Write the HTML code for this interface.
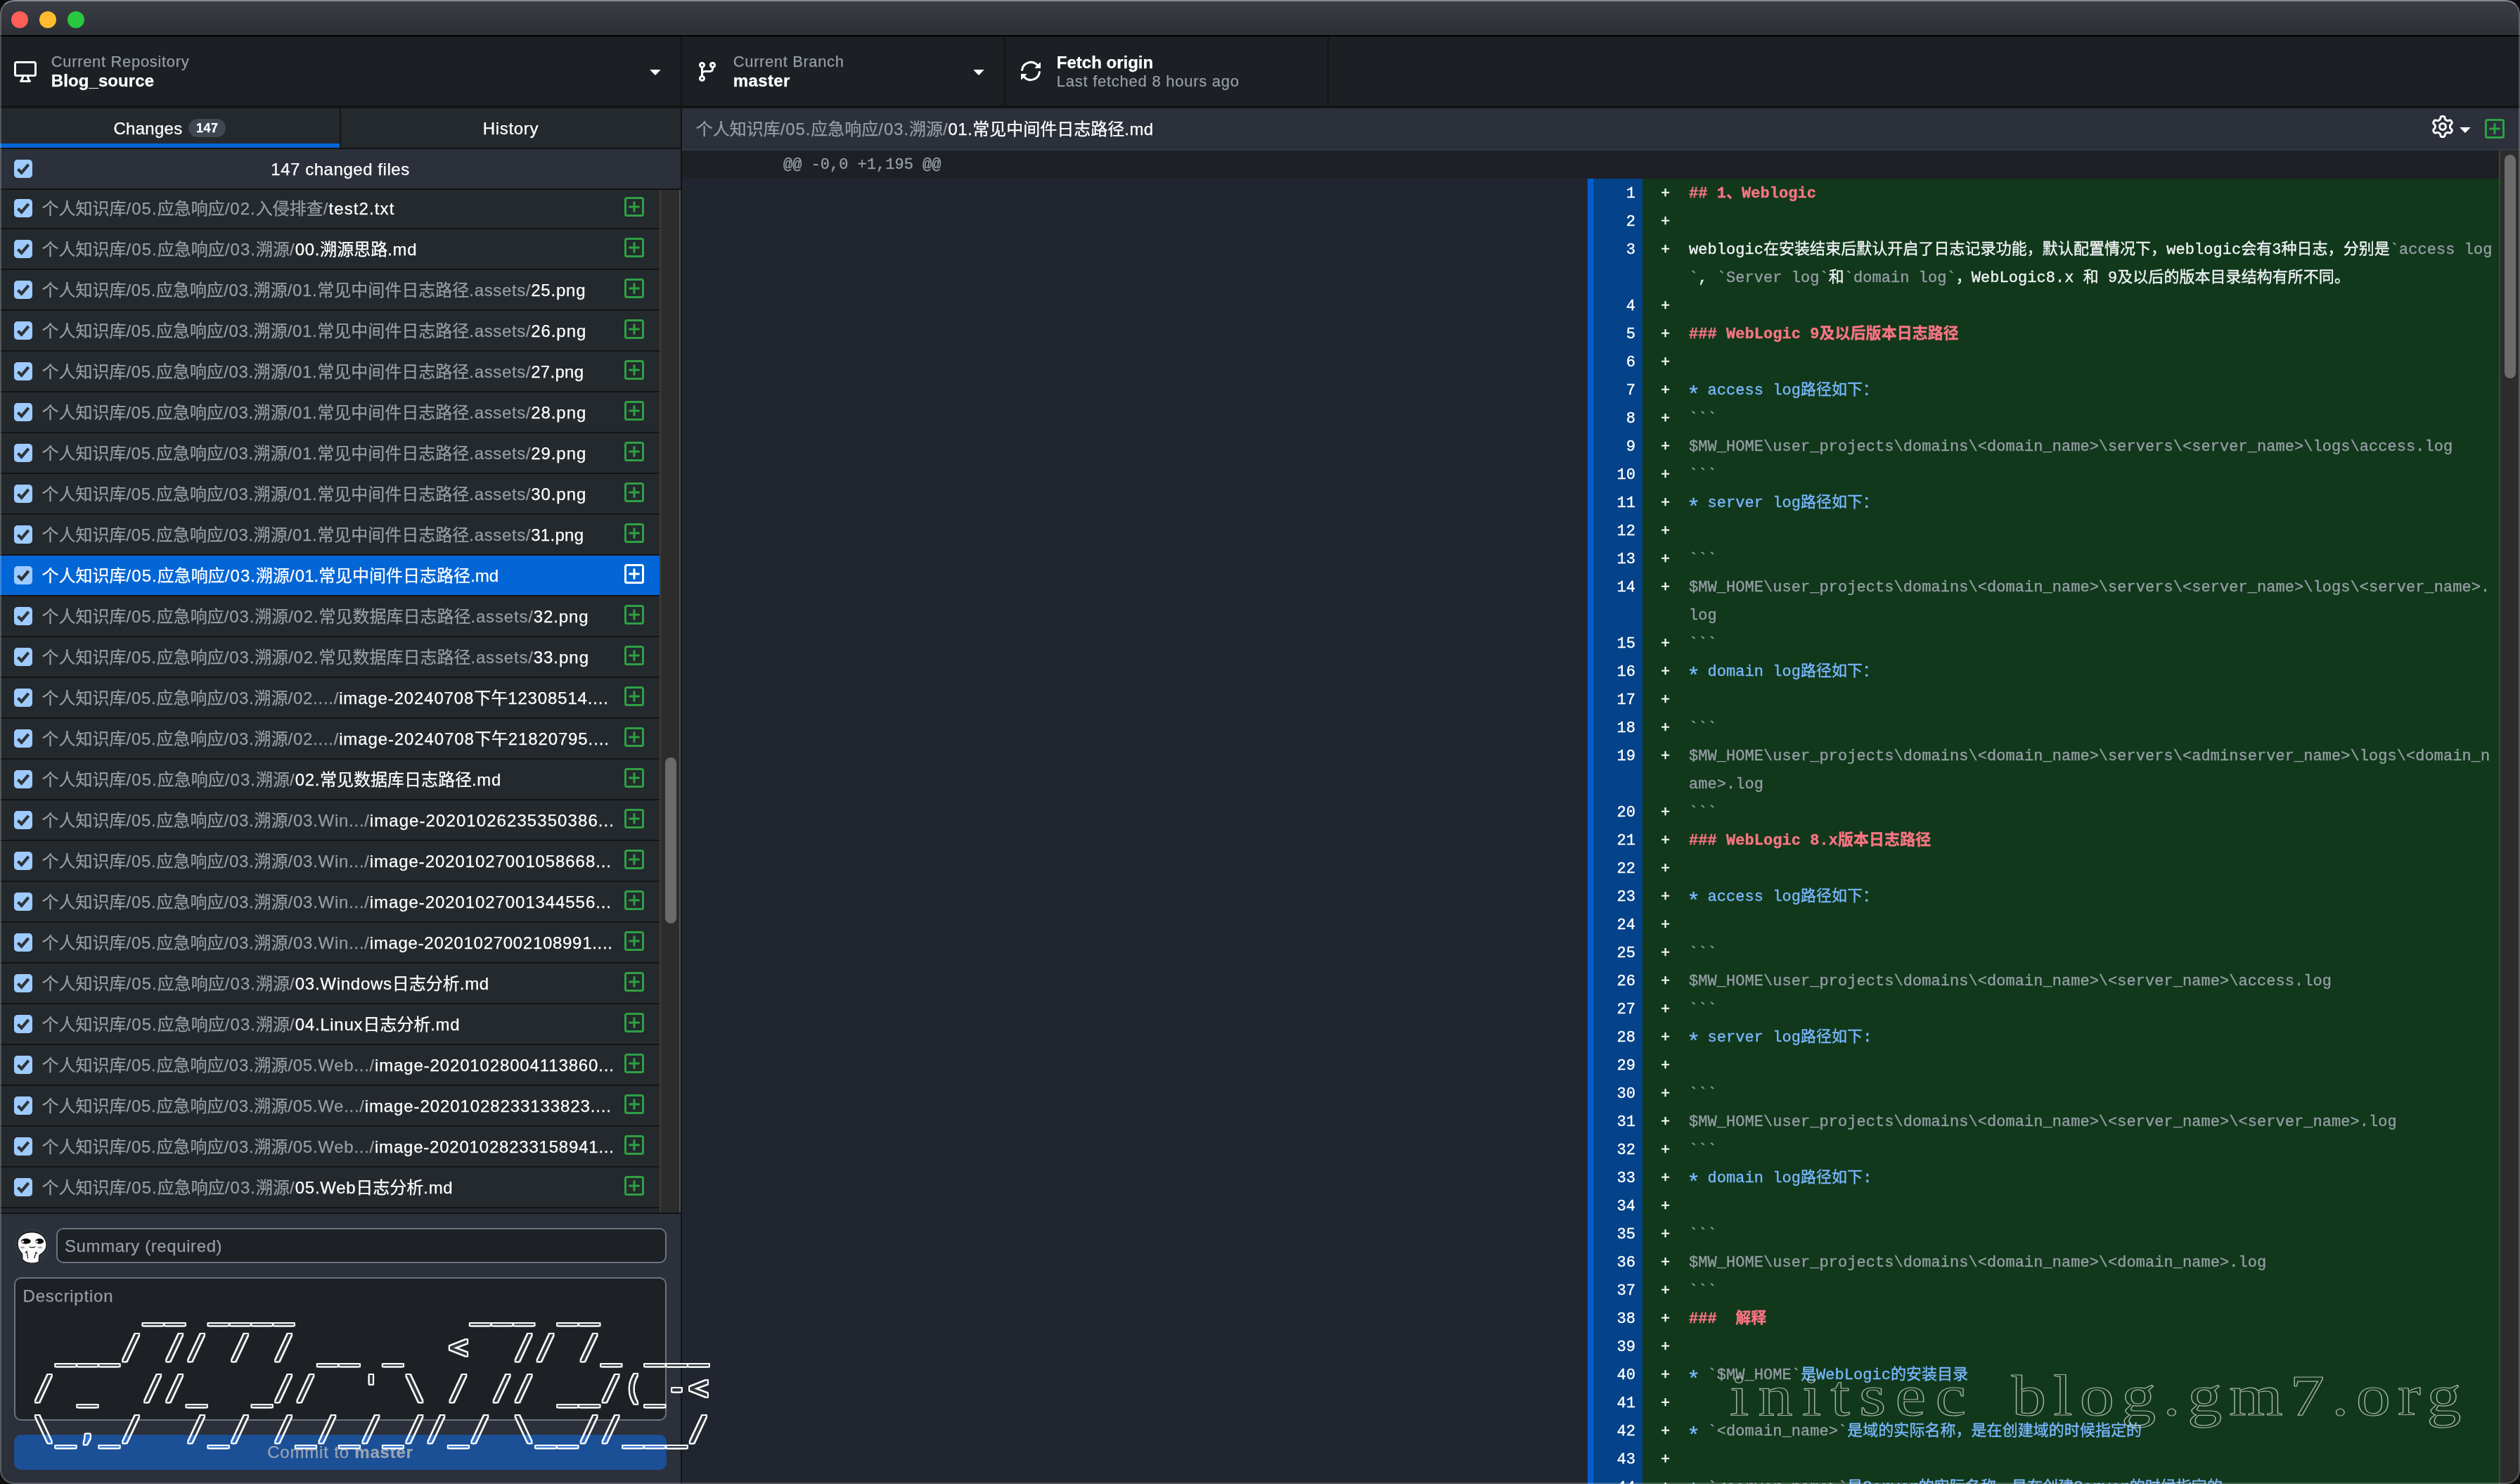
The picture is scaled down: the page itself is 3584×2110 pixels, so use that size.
<!DOCTYPE html>
<html lang="zh"><head><meta charset="utf-8"><title>GitHub Desktop - Blog_source</title>
<style>
*{box-sizing:border-box;margin:0;padding:0}
html,body{width:3584px;height:2110px;overflow:hidden;background:#0f0f0f}
body{font-family:"Liberation Sans","Noto Sans CJK SC",sans-serif;color:#fff;-webkit-font-smoothing:antialiased;-webkit-text-stroke:.25px}
#win{position:absolute;left:0;top:0;width:3584px;height:2110px;border-radius:20px;overflow:hidden;background:#24292e;will-change:transform}
.abs,.ic{position:absolute}
.c{letter-spacing:0}
#title{position:absolute;left:0;top:0;width:3584px;height:50px;background:linear-gradient(#3b3e46,#2c2f35)}
#title i{position:absolute;top:16px;width:24px;height:24px;border-radius:50%}
#tline{position:absolute;left:0;top:50px;width:3584px;height:2px;background:#000}
#toolbar{position:absolute;left:0;top:52px;width:3584px;height:98px;background:#1c1f24}
#tbline{position:absolute;left:0;top:150px;width:3584px;height:4px;background:#141414}
.vsep{position:absolute;top:52px;width:2px;height:98px;background:#141414}
.t1{position:absolute;font-size:22px;line-height:26px;color:#959da5;white-space:pre}
.t2{position:absolute;font-size:24px;line-height:28px;color:#fff;font-weight:bold;white-space:pre}
#side{position:absolute;left:0;top:154px;width:968px;height:1956px;background:#24292e}
#sideb{position:absolute;left:968px;top:52px;width:2px;height:2058px;background:#141414}
.tab{position:absolute;top:0;height:56px;font-size:24px;line-height:56px;text-align:center;color:#fff;white-space:pre}
#badge{display:inline-block;vertical-align:top;margin:15px 0 0 8.500px;height:26px;line-height:26px;padding:0 11px;border-radius:13px;background:#3f4753;font-size:18px;font-weight:bold;letter-spacing:.5px}
#hdr{position:absolute;left:0;top:58px;width:968px;height:56px;background:#2c303a;font-size:24px;line-height:58px;text-align:center;white-space:pre}
.cb{position:absolute;left:20px;top:15px;width:26px;height:26px;border-radius:5px;background:#9ecbff}
.cb svg{display:block}
#list{position:absolute;left:0;top:270px;width:968px;height:1454px;overflow:hidden;background:#24292e}
#list .in{position:absolute;left:0;top:-270px;width:968px}
.row{position:absolute;left:0;width:938px;height:58px;border-bottom:2px solid #141414;background:#24292e}
.row.sel{background:#0366d6}
.path{position:absolute;left:59.500px;top:1px;height:56px;line-height:56px;font-size:24px;white-space:pre}
.dir{color:#959da5} .nm{color:#fff}
.row.sel .dir{color:#fff}
#strack{position:absolute;left:938px;top:270px;width:30px;height:1454px;background:#2c2c2c;border-left:2px solid #3e3e3e;border-right:2px solid #505050}
#sthumb{position:absolute;left:946px;top:1077px;width:16px;height:236px;border-radius:8px;background:#6b6b6b}
#commit{position:absolute;left:0;top:1724px;width:968px;height:386px;background:#2c303a;border-top:2px solid #141414}
.inp{position:absolute;border:2px solid #6a737d;border-radius:10px;background:#1d2025;color:#959da5;font-size:24px;white-space:pre}
#btn{position:absolute;left:20px;top:2040px;width:928px;height:50px;border-radius:10px;background:#1b4f96;color:#9aa4b2;font-size:24px;line-height:50px;text-align:center;white-space:pre}
#dpath{position:absolute;left:970px;top:154px;width:2614px;height:60px;background:#2c303a;border-bottom:2px solid #333a44;font-size:24px;line-height:60px;white-space:pre}
#hunk{position:absolute;left:970px;top:214px;width:2584px;height:40px;background:#1d2025;color:#959da5;font:22px/42px "Liberation Mono","Noto Sans CJK SC",monospace;white-space:pre;-webkit-text-stroke:.35px}
#lpane{position:absolute;left:970px;top:254px;width:1288px;height:1856px;background:#21252f}
#rpane{position:absolute;left:2258px;top:254px;width:1296px;height:1856px;background:#11381b}
#gut1{position:absolute;left:2258px;top:254px;width:8px;height:1856px;background:#0060cf}
#gut2{position:absolute;left:2266px;top:254px;width:70px;height:1856px;background:#044289}
.dl{position:absolute;left:2258px;width:1296px;height:40px;font:22px/40px "Liberation Mono","Noto Sans CJK SC",monospace;white-space:pre;padding-top:2px;letter-spacing:.045px;-webkit-text-stroke:.35px}
.ln{position:absolute;left:8px;width:60px;text-align:right;color:#fff}
.pl{position:absolute;left:104px;color:#fff}
.tx{position:absolute;left:144px}
.as{display:inline-block;width:13.245px;font-size:32px;line-height:0;position:relative;top:10px;left:-3px}
.p{color:#f0f3f6} .r{color:#f97583;font-weight:bold} .b{color:#79b8ff} .g{color:#959da5}
#dtrack{position:absolute;left:3554px;top:214px;width:30px;height:1896px;background:#2c2c2c;border-left:2px solid #424242}
#dthumb{position:absolute;left:3562px;top:220px;width:16px;height:318px;border-radius:8px;background:#6b6b6b}
#art{position:absolute;left:17.500px;top:1828px;letter-spacing:3.100px;font:46.400px/58px "DejaVu Sans Mono","Liberation Mono",monospace;white-space:pre;color:transparent;background:linear-gradient(to right,transparent 931px,#30343a 931px),linear-gradient(to bottom,#30343a 212px,#2a6fd0 212px,#2a6fd0 262px,#30343a 262px);-webkit-background-clip:text;background-clip:text;filter:drop-shadow(2px 0 0 #fff) drop-shadow(-2px 0 0 #fff) drop-shadow(0 2px 0 #fff) drop-shadow(0 -2px 0 #fff)}
.wm{position:absolute;top:1938px;font:82px/94px "Liberation Serif",serif;white-space:pre;color:transparent;-webkit-text-stroke:1.200px rgba(205,208,200,.8);transform:scaleX(1.2);transform-origin:0 0}
#edge{position:absolute;left:0;top:0;width:3584px;height:2110px;border-radius:20px;border:2px solid rgba(255,255,255,.22);border-top-color:rgba(255,255,255,.4);pointer-events:none}
</style></head><body>
<div id="win">
<div id="title"><i style="left:16px;background:#ff5f57"></i><i style="left:56px;background:#febc2e"></i><i style="left:96px;background:#28c840"></i></div>
<div id="tline"></div>
<div id="toolbar"></div><div id="tbline"></div>
<svg class="ic" style="left:20px;top:85px" width="32" height="32" viewBox="0 0 16 16" fill="#fff" ><path d="M14.25 1c.966 0 1.75.784 1.75 1.75v7.5A1.75 1.75 0 0 1 14.25 12h-3.727c.099 1.041.52 1.872 1.292 2.757A.752.752 0 0 1 11.25 16h-6.5a.75.75 0 0 1-.565-1.243c.772-.885 1.192-1.716 1.292-2.757H1.75A1.75 1.75 0 0 1 0 10.25v-7.5C0 1.784.784 1 1.75 1ZM1.75 2.5a.25.25 0 0 0-.25.25v7.5c0 .138.112.25.25.25h12.5a.25.25 0 0 0 .25-.25v-7.5a.25.25 0 0 0-.25-.25ZM9.018 12H6.982a5.72 5.72 0 0 1-.765 2.5h3.566a5.72 5.72 0 0 1-.765-2.5Z"/></svg>
<div class="t1" style="left:72.800px;top:75px;letter-spacing:.66px">Current Repository</div>
<div class="t2" style="left:72.800px;top:101px;letter-spacing:.09px">Blog_source</div>
<svg class="ic" style="left:916px;top:85px" width="32" height="32" viewBox="0 0 16 16" fill="#fff" ><path d="m4.427 7.427 3.396 3.396a.25.25 0 0 0 .354 0l3.396-3.396A.25.25 0 0 0 11.396 7H4.604a.25.25 0 0 0-.177.427Z"/></svg>
<div class="vsep" style="left:968px"></div>
<svg class="ic" style="left:990px;top:85.5px" width="32" height="32" viewBox="0 0 16 16" fill="#fff" ><path d="M9.5 3.25a2.25 2.25 0 1 1 3 2.122V6A2.5 2.5 0 0 1 10 8.5H6a1 1 0 0 0-1 1v1.128a2.251 2.251 0 1 1-1.5 0V5.372a2.25 2.25 0 1 1 1.5 0v1.836A2.493 2.493 0 0 1 6 7h4a1 1 0 0 0 1-1v-.628A2.25 2.25 0 0 1 9.5 3.25Zm-6 0a.75.75 0 1 0 1.5 0 .75.75 0 0 0-1.5 0Zm8.25-.75a.75.75 0 1 0 0 1.5.75.75 0 0 0 0-1.5ZM4.25 12a.75.75 0 1 0 0 1.5.75.75 0 0 0 0-1.5Z"/></svg>
<div class="t1" style="left:1042.800px;top:75px;letter-spacing:.61px">Current Branch</div>
<div class="t2" style="left:1042.800px;top:101px;letter-spacing:.35px">master</div>
<svg class="ic" style="left:1376px;top:85px" width="32" height="32" viewBox="0 0 16 16" fill="#fff" ><path d="m4.427 7.427 3.396 3.396a.25.25 0 0 0 .354 0l3.396-3.396A.25.25 0 0 0 11.396 7H4.604a.25.25 0 0 0-.177.427Z"/></svg>
<div class="vsep" style="left:1428px"></div>
<svg class="ic" style="left:1450px;top:85px;transform:scaleX(-1)" width="32" height="32" viewBox="0 0 16 16" fill="#fff" ><path d="M1.705 8.005a.75.75 0 0 1 .834.656 5.5 5.5 0 0 0 9.592 2.97l-1.204-1.204a.25.25 0 0 1 .177-.427h3.646a.25.25 0 0 1 .25.25v3.646a.25.25 0 0 1-.427.177l-1.38-1.38A7.002 7.002 0 0 1 1.05 8.84a.75.75 0 0 1 .656-.834ZM8 2.5a5.487 5.487 0 0 0-4.131 1.869l1.204 1.204A.25.25 0 0 1 4.896 6H1.25A.25.25 0 0 1 1 5.75V2.104a.25.25 0 0 1 .427-.177l1.38 1.38A7.002 7.002 0 0 1 14.95 7.16a.75.75 0 0 1-1.49.178A5.5 5.5 0 0 0 8 2.5Z"/></svg>
<div class="t2" style="left:1502.800px;top:75px">Fetch origin</div>
<div class="t1" style="left:1502.800px;top:103px;letter-spacing:.74px">Last fetched 8 hours ago</div>
<div class="vsep" style="left:1888px"></div>

<div id="side">
 <div class="tab" style="left:0;width:483px;border-bottom:6px solid #0366d6;height:56px;line-height:58px"><span id="tchg" style="letter-spacing:.26px">Changes</span><span id="badge">147</span></div>
 <div class="abs" style="left:483px;top:0;width:2px;height:56px;background:#141414"></div>
 <div class="tab" style="left:485px;width:483px;line-height:58px;letter-spacing:.67px">History</div>
 <div class="abs" style="left:0;top:56px;width:968px;height:2px;background:#141414"></div>
 <div id="hdr"><span class="cb" style="top:15px"><svg width="26" height="26" viewBox="0 0 26 26"><path d="M5.5 13.6 L10.6 18.6 L20.6 6.9" fill="none" stroke="#2f3337" stroke-width="4.2"/></svg></span><span style="letter-spacing:.55px">147 changed files</span></div>
 <div class="abs" style="left:0;top:114px;width:968px;height:2px;background:#141414"></div>
</div>
<div id="list"><div class="in">
<div class="row" style="top:268px"><span class="cb"><svg width="26" height="26" viewBox="0 0 26 26"><path d="M5.5 13.6 L10.6 18.6 L20.6 6.9" fill="none" stroke="#2f3337" stroke-width="4.2"/></svg></span><span class="path" id="p0"><span class="dir" id="d0"><span class="c">个人知识库</span><span style="letter-spacing:1.028px">/05.</span><span class="c">应急响应</span><span style="letter-spacing:1.028px">/02.</span><span class="c">入侵排查</span><span style="letter-spacing:1.028px">/</span></span><span class="nm" id="n0"><span style="letter-spacing:1.096px">test2.txt</span></span></span><svg class="ic" style="left:886px;top:9.5px" width="32" height="32" viewBox="0 0 16 16" fill="#2ea043" ><path d="M2.75 1h10.5c.966 0 1.75.784 1.75 1.75v10.5A1.75 1.75 0 0 1 13.25 15H2.75A1.75 1.75 0 0 1 1 13.25V2.75C1 1.784 1.784 1 2.75 1Zm10.5 1.5H2.75a.25.25 0 0 0-.25.25v10.5c0 .138.112.25.25.25h10.5a.25.25 0 0 0 .25-.25V2.75a.25.25 0 0 0-.25-.25ZM8 4a.75.75 0 0 1 .75.75v2.5h2.5a.75.75 0 0 1 0 1.5h-2.5v2.5a.75.75 0 0 1-1.5 0v-2.5h-2.5a.75.75 0 0 1 0-1.5h2.5v-2.5A.75.75 0 0 1 8 4Z"/></svg></div>
<div class="row" style="top:326px"><span class="cb"><svg width="26" height="26" viewBox="0 0 26 26"><path d="M5.5 13.6 L10.6 18.6 L20.6 6.9" fill="none" stroke="#2f3337" stroke-width="4.2"/></svg></span><span class="path" id="p1"><span class="dir" id="d1"><span class="c">个人知识库</span><span style="letter-spacing:1.059px">/05.</span><span class="c">应急响应</span><span style="letter-spacing:1.059px">/03.</span><span class="c">溯源</span><span style="letter-spacing:1.059px">/</span></span><span class="nm" id="n1"><span style="letter-spacing:0.661px">00.</span><span class="c">溯源思路</span><span style="letter-spacing:0.661px">.md</span></span></span><svg class="ic" style="left:886px;top:9.5px" width="32" height="32" viewBox="0 0 16 16" fill="#2ea043" ><path d="M2.75 1h10.5c.966 0 1.75.784 1.75 1.75v10.5A1.75 1.75 0 0 1 13.25 15H2.75A1.75 1.75 0 0 1 1 13.25V2.75C1 1.784 1.784 1 2.75 1Zm10.5 1.5H2.75a.25.25 0 0 0-.25.25v10.5c0 .138.112.25.25.25h10.5a.25.25 0 0 0 .25-.25V2.75a.25.25 0 0 0-.25-.25ZM8 4a.75.75 0 0 1 .75.75v2.5h2.5a.75.75 0 0 1 0 1.5h-2.5v2.5a.75.75 0 0 1-1.5 0v-2.5h-2.5a.75.75 0 0 1 0-1.5h2.5v-2.5A.75.75 0 0 1 8 4Z"/></svg></div>
<div class="row" style="top:384px"><span class="cb"><svg width="26" height="26" viewBox="0 0 26 26"><path d="M5.5 13.6 L10.6 18.6 L20.6 6.9" fill="none" stroke="#2f3337" stroke-width="4.2"/></svg></span><span class="path" id="p2"><span class="dir" id="d2"><span class="c">个人知识库</span><span style="letter-spacing:0.644px">/05.</span><span class="c">应急响应</span><span style="letter-spacing:0.644px">/03.</span><span class="c">溯源</span><span style="letter-spacing:0.644px">/01.</span><span class="c">常见中间件日志路径</span><span style="letter-spacing:0.644px">.assets/</span></span><span class="nm" id="n2"><span style="letter-spacing:0.777px">25.png</span></span></span><svg class="ic" style="left:886px;top:9.5px" width="32" height="32" viewBox="0 0 16 16" fill="#2ea043" ><path d="M2.75 1h10.5c.966 0 1.75.784 1.75 1.75v10.5A1.75 1.75 0 0 1 13.25 15H2.75A1.75 1.75 0 0 1 1 13.25V2.75C1 1.784 1.784 1 2.75 1Zm10.5 1.5H2.75a.25.25 0 0 0-.25.25v10.5c0 .138.112.25.25.25h10.5a.25.25 0 0 0 .25-.25V2.75a.25.25 0 0 0-.25-.25ZM8 4a.75.75 0 0 1 .75.75v2.5h2.5a.75.75 0 0 1 0 1.5h-2.5v2.5a.75.75 0 0 1-1.5 0v-2.5h-2.5a.75.75 0 0 1 0-1.5h2.5v-2.5A.75.75 0 0 1 8 4Z"/></svg></div>
<div class="row" style="top:442px"><span class="cb"><svg width="26" height="26" viewBox="0 0 26 26"><path d="M5.5 13.6 L10.6 18.6 L20.6 6.9" fill="none" stroke="#2f3337" stroke-width="4.2"/></svg></span><span class="path" id="p3"><span class="dir" id="d3"><span class="c">个人知识库</span><span style="letter-spacing:0.644px">/05.</span><span class="c">应急响应</span><span style="letter-spacing:0.644px">/03.</span><span class="c">溯源</span><span style="letter-spacing:0.644px">/01.</span><span class="c">常见中间件日志路径</span><span style="letter-spacing:0.644px">.assets/</span></span><span class="nm" id="n3"><span style="letter-spacing:0.938px">26.png</span></span></span><svg class="ic" style="left:886px;top:9.5px" width="32" height="32" viewBox="0 0 16 16" fill="#2ea043" ><path d="M2.75 1h10.5c.966 0 1.75.784 1.75 1.75v10.5A1.75 1.75 0 0 1 13.25 15H2.75A1.75 1.75 0 0 1 1 13.25V2.75C1 1.784 1.784 1 2.75 1Zm10.5 1.5H2.75a.25.25 0 0 0-.25.25v10.5c0 .138.112.25.25.25h10.5a.25.25 0 0 0 .25-.25V2.75a.25.25 0 0 0-.25-.25ZM8 4a.75.75 0 0 1 .75.75v2.5h2.5a.75.75 0 0 1 0 1.5h-2.5v2.5a.75.75 0 0 1-1.5 0v-2.5h-2.5a.75.75 0 0 1 0-1.5h2.5v-2.5A.75.75 0 0 1 8 4Z"/></svg></div>
<div class="row" style="top:500px"><span class="cb"><svg width="26" height="26" viewBox="0 0 26 26"><path d="M5.5 13.6 L10.6 18.6 L20.6 6.9" fill="none" stroke="#2f3337" stroke-width="4.2"/></svg></span><span class="path" id="p4"><span class="dir" id="d4"><span class="c">个人知识库</span><span style="letter-spacing:0.644px">/05.</span><span class="c">应急响应</span><span style="letter-spacing:0.644px">/03.</span><span class="c">溯源</span><span style="letter-spacing:0.644px">/01.</span><span class="c">常见中间件日志路径</span><span style="letter-spacing:0.644px">.assets/</span></span><span class="nm" id="n4"><span style="letter-spacing:0.277px">27.png</span></span></span><svg class="ic" style="left:886px;top:9.5px" width="32" height="32" viewBox="0 0 16 16" fill="#2ea043" ><path d="M2.75 1h10.5c.966 0 1.75.784 1.75 1.75v10.5A1.75 1.75 0 0 1 13.25 15H2.75A1.75 1.75 0 0 1 1 13.25V2.75C1 1.784 1.784 1 2.75 1Zm10.5 1.5H2.75a.25.25 0 0 0-.25.25v10.5c0 .138.112.25.25.25h10.5a.25.25 0 0 0 .25-.25V2.75a.25.25 0 0 0-.25-.25ZM8 4a.75.75 0 0 1 .75.75v2.5h2.5a.75.75 0 0 1 0 1.5h-2.5v2.5a.75.75 0 0 1-1.5 0v-2.5h-2.5a.75.75 0 0 1 0-1.5h2.5v-2.5A.75.75 0 0 1 8 4Z"/></svg></div>
<div class="row" style="top:558px"><span class="cb"><svg width="26" height="26" viewBox="0 0 26 26"><path d="M5.5 13.6 L10.6 18.6 L20.6 6.9" fill="none" stroke="#2f3337" stroke-width="4.2"/></svg></span><span class="path" id="p5"><span class="dir" id="d5"><span class="c">个人知识库</span><span style="letter-spacing:0.644px">/05.</span><span class="c">应急响应</span><span style="letter-spacing:0.644px">/03.</span><span class="c">溯源</span><span style="letter-spacing:0.644px">/01.</span><span class="c">常见中间件日志路径</span><span style="letter-spacing:0.644px">.assets/</span></span><span class="nm" id="n5"><span style="letter-spacing:0.938px">28.png</span></span></span><svg class="ic" style="left:886px;top:9.5px" width="32" height="32" viewBox="0 0 16 16" fill="#2ea043" ><path d="M2.75 1h10.5c.966 0 1.75.784 1.75 1.75v10.5A1.75 1.75 0 0 1 13.25 15H2.75A1.75 1.75 0 0 1 1 13.25V2.75C1 1.784 1.784 1 2.75 1Zm10.5 1.5H2.75a.25.25 0 0 0-.25.25v10.5c0 .138.112.25.25.25h10.5a.25.25 0 0 0 .25-.25V2.75a.25.25 0 0 0-.25-.25ZM8 4a.75.75 0 0 1 .75.75v2.5h2.5a.75.75 0 0 1 0 1.5h-2.5v2.5a.75.75 0 0 1-1.5 0v-2.5h-2.5a.75.75 0 0 1 0-1.5h2.5v-2.5A.75.75 0 0 1 8 4Z"/></svg></div>
<div class="row" style="top:616px"><span class="cb"><svg width="26" height="26" viewBox="0 0 26 26"><path d="M5.5 13.6 L10.6 18.6 L20.6 6.9" fill="none" stroke="#2f3337" stroke-width="4.2"/></svg></span><span class="path" id="p6"><span class="dir" id="d6"><span class="c">个人知识库</span><span style="letter-spacing:0.644px">/05.</span><span class="c">应急响应</span><span style="letter-spacing:0.644px">/03.</span><span class="c">溯源</span><span style="letter-spacing:0.644px">/01.</span><span class="c">常见中间件日志路径</span><span style="letter-spacing:0.644px">.assets/</span></span><span class="nm" id="n6"><span style="letter-spacing:0.938px">29.png</span></span></span><svg class="ic" style="left:886px;top:9.5px" width="32" height="32" viewBox="0 0 16 16" fill="#2ea043" ><path d="M2.75 1h10.5c.966 0 1.75.784 1.75 1.75v10.5A1.75 1.75 0 0 1 13.25 15H2.75A1.75 1.75 0 0 1 1 13.25V2.75C1 1.784 1.784 1 2.75 1Zm10.5 1.5H2.75a.25.25 0 0 0-.25.25v10.5c0 .138.112.25.25.25h10.5a.25.25 0 0 0 .25-.25V2.75a.25.25 0 0 0-.25-.25ZM8 4a.75.75 0 0 1 .75.75v2.5h2.5a.75.75 0 0 1 0 1.5h-2.5v2.5a.75.75 0 0 1-1.5 0v-2.5h-2.5a.75.75 0 0 1 0-1.5h2.5v-2.5A.75.75 0 0 1 8 4Z"/></svg></div>
<div class="row" style="top:674px"><span class="cb"><svg width="26" height="26" viewBox="0 0 26 26"><path d="M5.5 13.6 L10.6 18.6 L20.6 6.9" fill="none" stroke="#2f3337" stroke-width="4.2"/></svg></span><span class="path" id="p7"><span class="dir" id="d7"><span class="c">个人知识库</span><span style="letter-spacing:0.644px">/05.</span><span class="c">应急响应</span><span style="letter-spacing:0.644px">/03.</span><span class="c">溯源</span><span style="letter-spacing:0.644px">/01.</span><span class="c">常见中间件日志路径</span><span style="letter-spacing:0.644px">.assets/</span></span><span class="nm" id="n7"><span style="letter-spacing:0.938px">30.png</span></span></span><svg class="ic" style="left:886px;top:9.5px" width="32" height="32" viewBox="0 0 16 16" fill="#2ea043" ><path d="M2.75 1h10.5c.966 0 1.75.784 1.75 1.75v10.5A1.75 1.75 0 0 1 13.25 15H2.75A1.75 1.75 0 0 1 1 13.25V2.75C1 1.784 1.784 1 2.75 1Zm10.5 1.5H2.75a.25.25 0 0 0-.25.25v10.5c0 .138.112.25.25.25h10.5a.25.25 0 0 0 .25-.25V2.75a.25.25 0 0 0-.25-.25ZM8 4a.75.75 0 0 1 .75.75v2.5h2.5a.75.75 0 0 1 0 1.5h-2.5v2.5a.75.75 0 0 1-1.5 0v-2.5h-2.5a.75.75 0 0 1 0-1.5h2.5v-2.5A.75.75 0 0 1 8 4Z"/></svg></div>
<div class="row" style="top:732px"><span class="cb"><svg width="26" height="26" viewBox="0 0 26 26"><path d="M5.5 13.6 L10.6 18.6 L20.6 6.9" fill="none" stroke="#2f3337" stroke-width="4.2"/></svg></span><span class="path" id="p8"><span class="dir" id="d8"><span class="c">个人知识库</span><span style="letter-spacing:0.644px">/05.</span><span class="c">应急响应</span><span style="letter-spacing:0.644px">/03.</span><span class="c">溯源</span><span style="letter-spacing:0.644px">/01.</span><span class="c">常见中间件日志路径</span><span style="letter-spacing:0.644px">.assets/</span></span><span class="nm" id="n8"><span style="letter-spacing:0.277px">31.png</span></span></span><svg class="ic" style="left:886px;top:9.5px" width="32" height="32" viewBox="0 0 16 16" fill="#2ea043" ><path d="M2.75 1h10.5c.966 0 1.75.784 1.75 1.75v10.5A1.75 1.75 0 0 1 13.25 15H2.75A1.75 1.75 0 0 1 1 13.25V2.75C1 1.784 1.784 1 2.75 1Zm10.5 1.5H2.75a.25.25 0 0 0-.25.25v10.5c0 .138.112.25.25.25h10.5a.25.25 0 0 0 .25-.25V2.75a.25.25 0 0 0-.25-.25ZM8 4a.75.75 0 0 1 .75.75v2.5h2.5a.75.75 0 0 1 0 1.5h-2.5v2.5a.75.75 0 0 1-1.5 0v-2.5h-2.5a.75.75 0 0 1 0-1.5h2.5v-2.5A.75.75 0 0 1 8 4Z"/></svg></div>
<div class="row sel" style="top:790px"><span class="cb"><svg width="26" height="26" viewBox="0 0 26 26"><path d="M5.5 13.6 L10.6 18.6 L20.6 6.9" fill="none" stroke="#2f3337" stroke-width="4.2"/></svg></span><span class="path" id="p9"><span class="dir" id="d9"><span class="c">个人知识库</span><span style="letter-spacing:1.059px">/05.</span><span class="c">应急响应</span><span style="letter-spacing:1.059px">/03.</span><span class="c">溯源</span><span style="letter-spacing:1.059px">/</span></span><span class="nm" id="n9"><span style="letter-spacing:-0.016px">01.</span><span class="c">常见中间件日志路径</span><span style="letter-spacing:-0.016px">.md</span></span></span><svg class="ic" style="left:886px;top:9.5px" width="32" height="32" viewBox="0 0 16 16" fill="#fff" ><path d="M2.75 1h10.5c.966 0 1.75.784 1.75 1.75v10.5A1.75 1.75 0 0 1 13.25 15H2.75A1.75 1.75 0 0 1 1 13.25V2.75C1 1.784 1.784 1 2.75 1Zm10.5 1.5H2.75a.25.25 0 0 0-.25.25v10.5c0 .138.112.25.25.25h10.5a.25.25 0 0 0 .25-.25V2.75a.25.25 0 0 0-.25-.25ZM8 4a.75.75 0 0 1 .75.75v2.5h2.5a.75.75 0 0 1 0 1.5h-2.5v2.5a.75.75 0 0 1-1.5 0v-2.5h-2.5a.75.75 0 0 1 0-1.5h2.5v-2.5A.75.75 0 0 1 8 4Z"/></svg></div>
<div class="row" style="top:848px"><span class="cb"><svg width="26" height="26" viewBox="0 0 26 26"><path d="M5.5 13.6 L10.6 18.6 L20.6 6.9" fill="none" stroke="#2f3337" stroke-width="4.2"/></svg></span><span class="path" id="p10"><span class="dir" id="d10"><span class="c">个人知识库</span><span style="letter-spacing:0.818px">/05.</span><span class="c">应急响应</span><span style="letter-spacing:0.818px">/03.</span><span class="c">溯源</span><span style="letter-spacing:0.818px">/02.</span><span class="c">常见数据库日志路径</span><span style="letter-spacing:0.818px">.assets/</span></span><span class="nm" id="n10"><span style="letter-spacing:0.878px">32.png</span></span></span><svg class="ic" style="left:886px;top:9.5px" width="32" height="32" viewBox="0 0 16 16" fill="#2ea043" ><path d="M2.75 1h10.5c.966 0 1.75.784 1.75 1.75v10.5A1.75 1.75 0 0 1 13.25 15H2.75A1.75 1.75 0 0 1 1 13.25V2.75C1 1.784 1.784 1 2.75 1Zm10.5 1.5H2.75a.25.25 0 0 0-.25.25v10.5c0 .138.112.25.25.25h10.5a.25.25 0 0 0 .25-.25V2.75a.25.25 0 0 0-.25-.25ZM8 4a.75.75 0 0 1 .75.75v2.5h2.5a.75.75 0 0 1 0 1.5h-2.5v2.5a.75.75 0 0 1-1.5 0v-2.5h-2.5a.75.75 0 0 1 0-1.5h2.5v-2.5A.75.75 0 0 1 8 4Z"/></svg></div>
<div class="row" style="top:906px"><span class="cb"><svg width="26" height="26" viewBox="0 0 26 26"><path d="M5.5 13.6 L10.6 18.6 L20.6 6.9" fill="none" stroke="#2f3337" stroke-width="4.2"/></svg></span><span class="path" id="p11"><span class="dir" id="d11"><span class="c">个人知识库</span><span style="letter-spacing:0.818px">/05.</span><span class="c">应急响应</span><span style="letter-spacing:0.818px">/03.</span><span class="c">溯源</span><span style="letter-spacing:0.818px">/02.</span><span class="c">常见数据库日志路径</span><span style="letter-spacing:0.818px">.assets/</span></span><span class="nm" id="n11"><span style="letter-spacing:0.976px">33.png</span></span></span><svg class="ic" style="left:886px;top:9.5px" width="32" height="32" viewBox="0 0 16 16" fill="#2ea043" ><path d="M2.75 1h10.5c.966 0 1.75.784 1.75 1.75v10.5A1.75 1.75 0 0 1 13.25 15H2.75A1.75 1.75 0 0 1 1 13.25V2.75C1 1.784 1.784 1 2.75 1Zm10.5 1.5H2.75a.25.25 0 0 0-.25.25v10.5c0 .138.112.25.25.25h10.5a.25.25 0 0 0 .25-.25V2.75a.25.25 0 0 0-.25-.25ZM8 4a.75.75 0 0 1 .75.75v2.5h2.5a.75.75 0 0 1 0 1.5h-2.5v2.5a.75.75 0 0 1-1.5 0v-2.5h-2.5a.75.75 0 0 1 0-1.5h2.5v-2.5A.75.75 0 0 1 8 4Z"/></svg></div>
<div class="row" style="top:964px"><span class="cb"><svg width="26" height="26" viewBox="0 0 26 26"><path d="M5.5 13.6 L10.6 18.6 L20.6 6.9" fill="none" stroke="#2f3337" stroke-width="4.2"/></svg></span><span class="path" id="p12"><span class="dir" id="d12"><span class="c">个人知识库</span><span style="letter-spacing:0.739px">/05.</span><span class="c">应急响应</span><span style="letter-spacing:0.739px">/03.</span><span class="c">溯源</span><span style="letter-spacing:0.739px">/02..../</span></span><span class="nm" id="n12"><span style="letter-spacing:0.852px">image-20240708</span><span class="c">下午</span><span style="letter-spacing:0.852px">12308514....</span></span></span><svg class="ic" style="left:886px;top:9.5px" width="32" height="32" viewBox="0 0 16 16" fill="#2ea043" ><path d="M2.75 1h10.5c.966 0 1.75.784 1.75 1.75v10.5A1.75 1.75 0 0 1 13.25 15H2.75A1.75 1.75 0 0 1 1 13.25V2.75C1 1.784 1.784 1 2.75 1Zm10.5 1.5H2.75a.25.25 0 0 0-.25.25v10.5c0 .138.112.25.25.25h10.5a.25.25 0 0 0 .25-.25V2.75a.25.25 0 0 0-.25-.25ZM8 4a.75.75 0 0 1 .75.75v2.5h2.5a.75.75 0 0 1 0 1.5h-2.5v2.5a.75.75 0 0 1-1.5 0v-2.5h-2.5a.75.75 0 0 1 0-1.5h2.5v-2.5A.75.75 0 0 1 8 4Z"/></svg></div>
<div class="row" style="top:1022px"><span class="cb"><svg width="26" height="26" viewBox="0 0 26 26"><path d="M5.5 13.6 L10.6 18.6 L20.6 6.9" fill="none" stroke="#2f3337" stroke-width="4.2"/></svg></span><span class="path" id="p13"><span class="dir" id="d13"><span class="c">个人知识库</span><span style="letter-spacing:0.739px">/05.</span><span class="c">应急响应</span><span style="letter-spacing:0.739px">/03.</span><span class="c">溯源</span><span style="letter-spacing:0.739px">/02..../</span></span><span class="nm" id="n13"><span style="letter-spacing:0.888px">image-20240708</span><span class="c">下午</span><span style="letter-spacing:0.888px">21820795....</span></span></span><svg class="ic" style="left:886px;top:9.5px" width="32" height="32" viewBox="0 0 16 16" fill="#2ea043" ><path d="M2.75 1h10.5c.966 0 1.75.784 1.75 1.75v10.5A1.75 1.75 0 0 1 13.25 15H2.75A1.75 1.75 0 0 1 1 13.25V2.75C1 1.784 1.784 1 2.75 1Zm10.5 1.5H2.75a.25.25 0 0 0-.25.25v10.5c0 .138.112.25.25.25h10.5a.25.25 0 0 0 .25-.25V2.75a.25.25 0 0 0-.25-.25ZM8 4a.75.75 0 0 1 .75.75v2.5h2.5a.75.75 0 0 1 0 1.5h-2.5v2.5a.75.75 0 0 1-1.5 0v-2.5h-2.5a.75.75 0 0 1 0-1.5h2.5v-2.5A.75.75 0 0 1 8 4Z"/></svg></div>
<div class="row" style="top:1080px"><span class="cb"><svg width="26" height="26" viewBox="0 0 26 26"><path d="M5.5 13.6 L10.6 18.6 L20.6 6.9" fill="none" stroke="#2f3337" stroke-width="4.2"/></svg></span><span class="path" id="p14"><span class="dir" id="d14"><span class="c">个人知识库</span><span style="letter-spacing:1.059px">/05.</span><span class="c">应急响应</span><span style="letter-spacing:1.059px">/03.</span><span class="c">溯源</span><span style="letter-spacing:1.059px">/</span></span><span class="nm" id="n14"><span style="letter-spacing:0.623px">02.</span><span class="c">常见数据库日志路径</span><span style="letter-spacing:0.623px">.md</span></span></span><svg class="ic" style="left:886px;top:9.5px" width="32" height="32" viewBox="0 0 16 16" fill="#2ea043" ><path d="M2.75 1h10.5c.966 0 1.75.784 1.75 1.75v10.5A1.75 1.75 0 0 1 13.25 15H2.75A1.75 1.75 0 0 1 1 13.25V2.75C1 1.784 1.784 1 2.75 1Zm10.5 1.5H2.75a.25.25 0 0 0-.25.25v10.5c0 .138.112.25.25.25h10.5a.25.25 0 0 0 .25-.25V2.75a.25.25 0 0 0-.25-.25ZM8 4a.75.75 0 0 1 .75.75v2.5h2.5a.75.75 0 0 1 0 1.5h-2.5v2.5a.75.75 0 0 1-1.5 0v-2.5h-2.5a.75.75 0 0 1 0-1.5h2.5v-2.5A.75.75 0 0 1 8 4Z"/></svg></div>
<div class="row" style="top:1138px"><span class="cb"><svg width="26" height="26" viewBox="0 0 26 26"><path d="M5.5 13.6 L10.6 18.6 L20.6 6.9" fill="none" stroke="#2f3337" stroke-width="4.2"/></svg></span><span class="path" id="p15"><span class="dir" id="d15"><span class="c">个人知识库</span><span style="letter-spacing:0.746px">/05.</span><span class="c">应急响应</span><span style="letter-spacing:0.746px">/03.</span><span class="c">溯源</span><span style="letter-spacing:0.746px">/03.Win.../</span></span><span class="nm" id="n15"><span style="letter-spacing:1.077px">image-20201026235350386...</span></span></span><svg class="ic" style="left:886px;top:9.5px" width="32" height="32" viewBox="0 0 16 16" fill="#2ea043" ><path d="M2.75 1h10.5c.966 0 1.75.784 1.75 1.75v10.5A1.75 1.75 0 0 1 13.25 15H2.75A1.75 1.75 0 0 1 1 13.25V2.75C1 1.784 1.784 1 2.75 1Zm10.5 1.5H2.75a.25.25 0 0 0-.25.25v10.5c0 .138.112.25.25.25h10.5a.25.25 0 0 0 .25-.25V2.75a.25.25 0 0 0-.25-.25ZM8 4a.75.75 0 0 1 .75.75v2.5h2.5a.75.75 0 0 1 0 1.5h-2.5v2.5a.75.75 0 0 1-1.5 0v-2.5h-2.5a.75.75 0 0 1 0-1.5h2.5v-2.5A.75.75 0 0 1 8 4Z"/></svg></div>
<div class="row" style="top:1196px"><span class="cb"><svg width="26" height="26" viewBox="0 0 26 26"><path d="M5.5 13.6 L10.6 18.6 L20.6 6.9" fill="none" stroke="#2f3337" stroke-width="4.2"/></svg></span><span class="path" id="p16"><span class="dir" id="d16"><span class="c">个人知识库</span><span style="letter-spacing:0.746px">/05.</span><span class="c">应急响应</span><span style="letter-spacing:0.746px">/03.</span><span class="c">溯源</span><span style="letter-spacing:0.746px">/03.Win.../</span></span><span class="nm" id="n16"><span style="letter-spacing:0.917px">image-20201027001058668...</span></span></span><svg class="ic" style="left:886px;top:9.5px" width="32" height="32" viewBox="0 0 16 16" fill="#2ea043" ><path d="M2.75 1h10.5c.966 0 1.75.784 1.75 1.75v10.5A1.75 1.75 0 0 1 13.25 15H2.75A1.75 1.75 0 0 1 1 13.25V2.75C1 1.784 1.784 1 2.75 1Zm10.5 1.5H2.75a.25.25 0 0 0-.25.25v10.5c0 .138.112.25.25.25h10.5a.25.25 0 0 0 .25-.25V2.75a.25.25 0 0 0-.25-.25ZM8 4a.75.75 0 0 1 .75.75v2.5h2.5a.75.75 0 0 1 0 1.5h-2.5v2.5a.75.75 0 0 1-1.5 0v-2.5h-2.5a.75.75 0 0 1 0-1.5h2.5v-2.5A.75.75 0 0 1 8 4Z"/></svg></div>
<div class="row" style="top:1254px"><span class="cb"><svg width="26" height="26" viewBox="0 0 26 26"><path d="M5.5 13.6 L10.6 18.6 L20.6 6.9" fill="none" stroke="#2f3337" stroke-width="4.2"/></svg></span><span class="path" id="p17"><span class="dir" id="d17"><span class="c">个人知识库</span><span style="letter-spacing:0.746px">/05.</span><span class="c">应急响应</span><span style="letter-spacing:0.746px">/03.</span><span class="c">溯源</span><span style="letter-spacing:0.746px">/03.Win.../</span></span><span class="nm" id="n17"><span style="letter-spacing:0.917px">image-20201027001344556...</span></span></span><svg class="ic" style="left:886px;top:9.5px" width="32" height="32" viewBox="0 0 16 16" fill="#2ea043" ><path d="M2.75 1h10.5c.966 0 1.75.784 1.75 1.75v10.5A1.75 1.75 0 0 1 13.25 15H2.75A1.75 1.75 0 0 1 1 13.25V2.75C1 1.784 1.784 1 2.75 1Zm10.5 1.5H2.75a.25.25 0 0 0-.25.25v10.5c0 .138.112.25.25.25h10.5a.25.25 0 0 0 .25-.25V2.75a.25.25 0 0 0-.25-.25ZM8 4a.75.75 0 0 1 .75.75v2.5h2.5a.75.75 0 0 1 0 1.5h-2.5v2.5a.75.75 0 0 1-1.5 0v-2.5h-2.5a.75.75 0 0 1 0-1.5h2.5v-2.5A.75.75 0 0 1 8 4Z"/></svg></div>
<div class="row" style="top:1312px"><span class="cb"><svg width="26" height="26" viewBox="0 0 26 26"><path d="M5.5 13.6 L10.6 18.6 L20.6 6.9" fill="none" stroke="#2f3337" stroke-width="4.2"/></svg></span><span class="path" id="p18"><span class="dir" id="d18"><span class="c">个人知识库</span><span style="letter-spacing:0.746px">/05.</span><span class="c">应急响应</span><span style="letter-spacing:0.746px">/03.</span><span class="c">溯源</span><span style="letter-spacing:0.746px">/03.Win.../</span></span><span class="nm" id="n18"><span style="letter-spacing:0.702px">image-20201027002108991....</span></span></span><svg class="ic" style="left:886px;top:9.5px" width="32" height="32" viewBox="0 0 16 16" fill="#2ea043" ><path d="M2.75 1h10.5c.966 0 1.75.784 1.75 1.75v10.5A1.75 1.75 0 0 1 13.25 15H2.75A1.75 1.75 0 0 1 1 13.25V2.75C1 1.784 1.784 1 2.75 1Zm10.5 1.5H2.75a.25.25 0 0 0-.25.25v10.5c0 .138.112.25.25.25h10.5a.25.25 0 0 0 .25-.25V2.75a.25.25 0 0 0-.25-.25ZM8 4a.75.75 0 0 1 .75.75v2.5h2.5a.75.75 0 0 1 0 1.5h-2.5v2.5a.75.75 0 0 1-1.5 0v-2.5h-2.5a.75.75 0 0 1 0-1.5h2.5v-2.5A.75.75 0 0 1 8 4Z"/></svg></div>
<div class="row" style="top:1370px"><span class="cb"><svg width="26" height="26" viewBox="0 0 26 26"><path d="M5.5 13.6 L10.6 18.6 L20.6 6.9" fill="none" stroke="#2f3337" stroke-width="4.2"/></svg></span><span class="path" id="p19"><span class="dir" id="d19"><span class="c">个人知识库</span><span style="letter-spacing:1.059px">/05.</span><span class="c">应急响应</span><span style="letter-spacing:1.059px">/03.</span><span class="c">溯源</span><span style="letter-spacing:1.059px">/</span></span><span class="nm" id="n19"><span style="letter-spacing:0.722px">03.Windows</span><span class="c">日志分析</span><span style="letter-spacing:0.722px">.md</span></span></span><svg class="ic" style="left:886px;top:9.5px" width="32" height="32" viewBox="0 0 16 16" fill="#2ea043" ><path d="M2.75 1h10.5c.966 0 1.75.784 1.75 1.75v10.5A1.75 1.75 0 0 1 13.25 15H2.75A1.75 1.75 0 0 1 1 13.25V2.75C1 1.784 1.784 1 2.75 1Zm10.5 1.5H2.75a.25.25 0 0 0-.25.25v10.5c0 .138.112.25.25.25h10.5a.25.25 0 0 0 .25-.25V2.75a.25.25 0 0 0-.25-.25ZM8 4a.75.75 0 0 1 .75.75v2.5h2.5a.75.75 0 0 1 0 1.5h-2.5v2.5a.75.75 0 0 1-1.5 0v-2.5h-2.5a.75.75 0 0 1 0-1.5h2.5v-2.5A.75.75 0 0 1 8 4Z"/></svg></div>
<div class="row" style="top:1428px"><span class="cb"><svg width="26" height="26" viewBox="0 0 26 26"><path d="M5.5 13.6 L10.6 18.6 L20.6 6.9" fill="none" stroke="#2f3337" stroke-width="4.2"/></svg></span><span class="path" id="p20"><span class="dir" id="d20"><span class="c">个人知识库</span><span style="letter-spacing:1.059px">/05.</span><span class="c">应急响应</span><span style="letter-spacing:1.059px">/03.</span><span class="c">溯源</span><span style="letter-spacing:1.059px">/</span></span><span class="nm" id="n20"><span style="letter-spacing:0.703px">04.Linux</span><span class="c">日志分析</span><span style="letter-spacing:0.703px">.md</span></span></span><svg class="ic" style="left:886px;top:9.5px" width="32" height="32" viewBox="0 0 16 16" fill="#2ea043" ><path d="M2.75 1h10.5c.966 0 1.75.784 1.75 1.75v10.5A1.75 1.75 0 0 1 13.25 15H2.75A1.75 1.75 0 0 1 1 13.25V2.75C1 1.784 1.784 1 2.75 1Zm10.5 1.5H2.75a.25.25 0 0 0-.25.25v10.5c0 .138.112.25.25.25h10.5a.25.25 0 0 0 .25-.25V2.75a.25.25 0 0 0-.25-.25ZM8 4a.75.75 0 0 1 .75.75v2.5h2.5a.75.75 0 0 1 0 1.5h-2.5v2.5a.75.75 0 0 1-1.5 0v-2.5h-2.5a.75.75 0 0 1 0-1.5h2.5v-2.5A.75.75 0 0 1 8 4Z"/></svg></div>
<div class="row" style="top:1486px"><span class="cb"><svg width="26" height="26" viewBox="0 0 26 26"><path d="M5.5 13.6 L10.6 18.6 L20.6 6.9" fill="none" stroke="#2f3337" stroke-width="4.2"/></svg></span><span class="path" id="p21"><span class="dir" id="d21"><span class="c">个人知识库</span><span style="letter-spacing:0.726px">/05.</span><span class="c">应急响应</span><span style="letter-spacing:0.726px">/03.</span><span class="c">溯源</span><span style="letter-spacing:0.726px">/05.Web.../</span></span><span class="nm" id="n21"><span style="letter-spacing:0.86px">image-20201028004113860...</span></span></span><svg class="ic" style="left:886px;top:9.5px" width="32" height="32" viewBox="0 0 16 16" fill="#2ea043" ><path d="M2.75 1h10.5c.966 0 1.75.784 1.75 1.75v10.5A1.75 1.75 0 0 1 13.25 15H2.75A1.75 1.75 0 0 1 1 13.25V2.75C1 1.784 1.784 1 2.75 1Zm10.5 1.5H2.75a.25.25 0 0 0-.25.25v10.5c0 .138.112.25.25.25h10.5a.25.25 0 0 0 .25-.25V2.75a.25.25 0 0 0-.25-.25ZM8 4a.75.75 0 0 1 .75.75v2.5h2.5a.75.75 0 0 1 0 1.5h-2.5v2.5a.75.75 0 0 1-1.5 0v-2.5h-2.5a.75.75 0 0 1 0-1.5h2.5v-2.5A.75.75 0 0 1 8 4Z"/></svg></div>
<div class="row" style="top:1544px"><span class="cb"><svg width="26" height="26" viewBox="0 0 26 26"><path d="M5.5 13.6 L10.6 18.6 L20.6 6.9" fill="none" stroke="#2f3337" stroke-width="4.2"/></svg></span><span class="path" id="p22"><span class="dir" id="d22"><span class="c">个人知识库</span><span style="letter-spacing:0.714px">/05.</span><span class="c">应急响应</span><span style="letter-spacing:0.714px">/03.</span><span class="c">溯源</span><span style="letter-spacing:0.714px">/05.We.../</span></span><span class="nm" id="n22"><span style="letter-spacing:0.898px">image-20201028233133823....</span></span></span><svg class="ic" style="left:886px;top:9.5px" width="32" height="32" viewBox="0 0 16 16" fill="#2ea043" ><path d="M2.75 1h10.5c.966 0 1.75.784 1.75 1.75v10.5A1.75 1.75 0 0 1 13.25 15H2.75A1.75 1.75 0 0 1 1 13.25V2.75C1 1.784 1.784 1 2.75 1Zm10.5 1.5H2.75a.25.25 0 0 0-.25.25v10.5c0 .138.112.25.25.25h10.5a.25.25 0 0 0 .25-.25V2.75a.25.25 0 0 0-.25-.25ZM8 4a.75.75 0 0 1 .75.75v2.5h2.5a.75.75 0 0 1 0 1.5h-2.5v2.5a.75.75 0 0 1-1.5 0v-2.5h-2.5a.75.75 0 0 1 0-1.5h2.5v-2.5A.75.75 0 0 1 8 4Z"/></svg></div>
<div class="row" style="top:1602px"><span class="cb"><svg width="26" height="26" viewBox="0 0 26 26"><path d="M5.5 13.6 L10.6 18.6 L20.6 6.9" fill="none" stroke="#2f3337" stroke-width="4.2"/></svg></span><span class="path" id="p23"><span class="dir" id="d23"><span class="c">个人知识库</span><span style="letter-spacing:0.726px">/05.</span><span class="c">应急响应</span><span style="letter-spacing:0.726px">/03.</span><span class="c">溯源</span><span style="letter-spacing:0.726px">/05.Web.../</span></span><span class="nm" id="n23"><span style="letter-spacing:0.789px">image-20201028233158941...</span></span></span><svg class="ic" style="left:886px;top:9.5px" width="32" height="32" viewBox="0 0 16 16" fill="#2ea043" ><path d="M2.75 1h10.5c.966 0 1.75.784 1.75 1.75v10.5A1.75 1.75 0 0 1 13.25 15H2.75A1.75 1.75 0 0 1 1 13.25V2.75C1 1.784 1.784 1 2.75 1Zm10.5 1.5H2.75a.25.25 0 0 0-.25.25v10.5c0 .138.112.25.25.25h10.5a.25.25 0 0 0 .25-.25V2.75a.25.25 0 0 0-.25-.25ZM8 4a.75.75 0 0 1 .75.75v2.5h2.5a.75.75 0 0 1 0 1.5h-2.5v2.5a.75.75 0 0 1-1.5 0v-2.5h-2.5a.75.75 0 0 1 0-1.5h2.5v-2.5A.75.75 0 0 1 8 4Z"/></svg></div>
<div class="row" style="top:1660px"><span class="cb"><svg width="26" height="26" viewBox="0 0 26 26"><path d="M5.5 13.6 L10.6 18.6 L20.6 6.9" fill="none" stroke="#2f3337" stroke-width="4.2"/></svg></span><span class="path" id="p24"><span class="dir" id="d24"><span class="c">个人知识库</span><span style="letter-spacing:1.059px">/05.</span><span class="c">应急响应</span><span style="letter-spacing:1.059px">/03.</span><span class="c">溯源</span><span style="letter-spacing:1.059px">/</span></span><span class="nm" id="n24"><span style="letter-spacing:0.7px">05.Web</span><span class="c">日志分析</span><span style="letter-spacing:0.7px">.md</span></span></span><svg class="ic" style="left:886px;top:9.5px" width="32" height="32" viewBox="0 0 16 16" fill="#2ea043" ><path d="M2.75 1h10.5c.966 0 1.75.784 1.75 1.75v10.5A1.75 1.75 0 0 1 13.25 15H2.75A1.75 1.75 0 0 1 1 13.25V2.75C1 1.784 1.784 1 2.75 1Zm10.5 1.5H2.75a.25.25 0 0 0-.25.25v10.5c0 .138.112.25.25.25h10.5a.25.25 0 0 0 .25-.25V2.75a.25.25 0 0 0-.25-.25ZM8 4a.75.75 0 0 1 .75.75v2.5h2.5a.75.75 0 0 1 0 1.5h-2.5v2.5a.75.75 0 0 1-1.5 0v-2.5h-2.5a.75.75 0 0 1 0-1.5h2.5v-2.5A.75.75 0 0 1 8 4Z"/></svg></div>
</div></div>
<div id="strack"></div><div id="sthumb"></div>
<div id="commit"></div>
<svg class="ic" style="left:20px;top:1746px" width="50" height="50" viewBox="0 0 50 50">
<circle cx="25" cy="25" r="25" fill="#2d353f"/>
<path d="M25.4 5.900C14 5.900 5.100 12 5.100 22.100C5.100 29 8 33 11.700 36.700L12 45C16 49 21 50 24.400 50C29 50 33 49.500 35.200 48.100L35.900 38.600C42 35 46 31 46 24.600C46 13 37 5.900 25.400 5.900Z" fill="#fbfafa" stroke="#0c0c0c" stroke-width="1.100"/>
<ellipse cx="16.700" cy="18.900" rx="7.100" ry="3.800" fill="#0d0b0c"/><ellipse cx="36.200" cy="18.900" rx="6" ry="3.800" fill="#0d0b0c"/>
<ellipse cx="12.200" cy="19.300" rx="2" ry="1.500" fill="#e9e6e7"/><ellipse cx="32.400" cy="19.300" rx="1.800" ry="1.500" fill="#e9e6e7"/>
<path d="M21.600 26.300Q23.800 28.600 25.900 27.300Q28 28.600 30.200 26.300" fill="none" stroke="#151314" stroke-width="1.100"/>
<rect x="8.900" y="26.600" width="6" height="2.500" rx="1" fill="#b9a5aa"/><rect x="34" y="26.600" width="6" height="2.500" rx="1" fill="#b9a5aa"/>
<path d="M15.800 35.500L18.100 33.200L19.700 43.500M33 36.500L31.200 34.600L28.600 43" fill="none" stroke="#151314" stroke-width="1.200"/>
</svg>
<div class="inp" style="left:80px;top:1746px;width:868px;height:50px;line-height:48px;padding-left:10px;letter-spacing:.6px">Summary (required)</div>
<div class="inp" style="left:20px;top:1816px;width:928px;height:204px;line-height:28px;padding:11px 0 0 10.500px;letter-spacing:.8px">Description</div>
<div id="btn" style="letter-spacing:.8px">Commit to <b>master</b></div>
<div id="sideb"></div>

<div id="dpath"><span style="margin-left:19.700px;color:#959da5"><span class="c">个人知识库</span><span style="letter-spacing:0.9px">/05.</span><span class="c">应急响应</span><span style="letter-spacing:0.9px">/03.</span><span class="c">溯源</span><span style="letter-spacing:0.9px">/</span></span><span><span style="letter-spacing:0.45px">01.</span><span class="c">常见中间件日志路径</span><span style="letter-spacing:0.45px">.md</span></span></div>
<svg class="ic" style="left:3458px;top:164px" width="32" height="32" viewBox="0 0 16 16" fill="#fff" ><path d="M8 0a8.2 8.2 0 0 1 .701.031C9.444.095 9.99.645 10.16 1.29l.288 1.107c.018.066.079.158.212.224.231.114.454.243.668.386.123.082.233.09.299.071l1.103-.303c.644-.176 1.392.021 1.82.63.27.385.506.792.704 1.218.315.675.111 1.422-.364 1.891l-.814.806c-.049.048-.098.147-.088.294.016.257.016.515 0 .772-.01.147.038.246.088.294l.814.806c.475.469.679 1.216.364 1.891a7.977 7.977 0 0 1-.704 1.217c-.428.61-1.176.807-1.82.63l-1.102-.302c-.067-.019-.177-.011-.3.071a5.909 5.909 0 0 1-.668.386c-.133.066-.194.158-.211.224l-.29 1.106c-.168.646-.715 1.196-1.458 1.26a8.006 8.006 0 0 1-1.402 0c-.743-.064-1.289-.614-1.458-1.26l-.289-1.106c-.018-.066-.079-.158-.212-.224a5.738 5.738 0 0 1-.668-.386c-.123-.082-.233-.09-.299-.071l-1.103.303c-.644.176-1.392-.021-1.82-.63a8.12 8.12 0 0 1-.704-1.218c-.315-.675-.111-1.422.363-1.891l.815-.806c.05-.048.098-.147.088-.294a6.214 6.214 0 0 1 0-.772c.01-.147-.038-.246-.088-.294l-.815-.806C.635 6.045.431 5.298.746 4.623a7.92 7.92 0 0 1 .704-1.217c.428-.61 1.176-.807 1.82-.63l1.102.302c.067.019.177.011.3-.071.214-.143.437-.272.668-.386.133-.066.194-.158.211-.224l.29-1.106C6.009.645 6.556.095 7.299.03 7.53.01 7.764 0 8 0Zm-.571 1.525c-.036.003-.108.036-.137.146l-.289 1.105c-.147.561-.549.967-.998 1.189-.173.086-.34.183-.5.29-.417.278-.97.423-1.529.27l-1.103-.303c-.109-.03-.175.016-.195.045-.22.312-.412.644-.573.99-.014.031-.021.11.059.19l.815.806c.411.406.562.957.53 1.456a4.709 4.709 0 0 0 0 .582c.032.499-.119 1.05-.53 1.456l-.815.806c-.081.08-.073.159-.059.19.162.346.353.677.573.989.02.03.085.076.195.046l1.102-.303c.56-.153 1.113-.008 1.53.27.161.107.328.204.501.29.447.222.85.629.997 1.189l.289 1.105c.029.109.101.143.137.146a6.6 6.6 0 0 0 1.142 0c.036-.003.108-.036.137-.146l.289-1.105c.147-.561.549-.967.998-1.189.173-.086.34-.183.5-.29.417-.278.97-.423 1.529-.27l1.103.303c.109.029.175-.016.195-.045.22-.313.411-.644.573-.99.014-.031.021-.11-.059-.19l-.815-.806c-.411-.406-.562-.957-.53-1.456a4.709 4.709 0 0 0 0-.582c-.032-.499.119-1.05.53-1.456l.815-.806c.081-.08.073-.159.059-.19a6.464 6.464 0 0 0-.573-.989c-.02-.03-.085-.076-.195-.046l-1.102.303c-.56.153-1.113.008-1.53-.27a4.44 4.44 0 0 0-.501-.29c-.447-.222-.85-.629-.997-1.189l-.289-1.105c-.029-.11-.101-.143-.137-.146a6.6 6.6 0 0 0-1.142 0ZM11 8a3 3 0 1 1-6 0 3 3 0 0 1 6 0ZM9.5 8a1.5 1.5 0 1 0-3.001.001A1.5 1.5 0 0 0 9.5 8Z"/></svg><svg class="ic" style="left:3490px;top:166.5px" width="32" height="32" viewBox="0 0 16 16" fill="#fff" ><path d="m4.427 7.427 3.396 3.396a.25.25 0 0 0 .354 0l3.396-3.396A.25.25 0 0 0 11.396 7H4.604a.25.25 0 0 0-.177.427Z"/></svg><svg class="ic" style="left:3532px;top:167px" width="32" height="32" viewBox="0 0 16 16" fill="#2ea043" ><path d="M2.75 1h10.5c.966 0 1.75.784 1.75 1.75v10.5A1.75 1.75 0 0 1 13.25 15H2.75A1.75 1.75 0 0 1 1 13.25V2.75C1 1.784 1.784 1 2.75 1Zm10.5 1.5H2.75a.25.25 0 0 0-.25.25v10.5c0 .138.112.25.25.25h10.5a.25.25 0 0 0 .25-.25V2.75a.25.25 0 0 0-.25-.25ZM8 4a.75.75 0 0 1 .75.75v2.5h2.5a.75.75 0 0 1 0 1.5h-2.5v2.5a.75.75 0 0 1-1.5 0v-2.5h-2.5a.75.75 0 0 1 0-1.5h2.5v-2.5A.75.75 0 0 1 8 4Z"/></svg>
<div id="hunk"><span style="margin-left:144px">@@ -0,0 +1,195 @@</span></div>
<div id="lpane"></div><div id="rpane"></div><div id="gut1"></div><div id="gut2"></div>
<div class="dl" style="top:254px"><span class="ln">1</span><span class="pl">+</span><span class="tx"><span class="r">## 1、Weblogic</span></span></div>
<div class="dl" style="top:294px"><span class="ln">2</span><span class="pl">+</span><span class="tx"></span></div>
<div class="dl" style="top:334px"><span class="ln">3</span><span class="pl">+</span><span class="tx"><span class="p">weblogic在安装结束后默认开启了日志记录功能，默认配置情况下，weblogic会有3种日志，分别是</span><span class="g">`access log</span></span></div>
<div class="dl" style="top:374px"><span class="tx"><span class="g">`</span><span class="p">, </span><span class="g">`Server log`</span><span class="p">和</span><span class="g">`domain log`</span><span class="p">，WebLogic8.x 和 9及以后的版本目录结构有所不同。</span></span></div>
<div class="dl" style="top:414px"><span class="ln">4</span><span class="pl">+</span><span class="tx"></span></div>
<div class="dl" style="top:454px"><span class="ln">5</span><span class="pl">+</span><span class="tx"><span class="r">### WebLogic 9及以后版本日志路径</span></span></div>
<div class="dl" style="top:494px"><span class="ln">6</span><span class="pl">+</span><span class="tx"></span></div>
<div class="dl" style="top:534px"><span class="ln">7</span><span class="pl">+</span><span class="tx"><span class="b"><span class="as">*</span> access log路径如下：</span></span></div>
<div class="dl" style="top:574px"><span class="ln">8</span><span class="pl">+</span><span class="tx"><span class="g">```</span></span></div>
<div class="dl" style="top:614px"><span class="ln">9</span><span class="pl">+</span><span class="tx"><span class="g">$MW_HOME\user_projects\domains\&lt;domain_name&gt;\servers\&lt;server_name&gt;\logs\access.log</span></span></div>
<div class="dl" style="top:654px"><span class="ln">10</span><span class="pl">+</span><span class="tx"><span class="g">```</span></span></div>
<div class="dl" style="top:694px"><span class="ln">11</span><span class="pl">+</span><span class="tx"><span class="b"><span class="as">*</span> server log路径如下：</span></span></div>
<div class="dl" style="top:734px"><span class="ln">12</span><span class="pl">+</span><span class="tx"></span></div>
<div class="dl" style="top:774px"><span class="ln">13</span><span class="pl">+</span><span class="tx"><span class="g">```</span></span></div>
<div class="dl" style="top:814px"><span class="ln">14</span><span class="pl">+</span><span class="tx"><span class="g">$MW_HOME\user_projects\domains\&lt;domain_name&gt;\servers\&lt;server_name&gt;\logs\&lt;server_name&gt;.</span></span></div>
<div class="dl" style="top:854px"><span class="tx"><span class="g">log</span></span></div>
<div class="dl" style="top:894px"><span class="ln">15</span><span class="pl">+</span><span class="tx"><span class="g">```</span></span></div>
<div class="dl" style="top:934px"><span class="ln">16</span><span class="pl">+</span><span class="tx"><span class="b"><span class="as">*</span> domain log路径如下：</span></span></div>
<div class="dl" style="top:974px"><span class="ln">17</span><span class="pl">+</span><span class="tx"></span></div>
<div class="dl" style="top:1014px"><span class="ln">18</span><span class="pl">+</span><span class="tx"><span class="g">```</span></span></div>
<div class="dl" style="top:1054px"><span class="ln">19</span><span class="pl">+</span><span class="tx"><span class="g">$MW_HOME\user_projects\domains\&lt;domain_name&gt;\servers\&lt;adminserver_name&gt;\logs\&lt;domain_n</span></span></div>
<div class="dl" style="top:1094px"><span class="tx"><span class="g">ame&gt;.log</span></span></div>
<div class="dl" style="top:1134px"><span class="ln">20</span><span class="pl">+</span><span class="tx"><span class="g">```</span></span></div>
<div class="dl" style="top:1174px"><span class="ln">21</span><span class="pl">+</span><span class="tx"><span class="r">### WebLogic 8.x版本日志路径</span></span></div>
<div class="dl" style="top:1214px"><span class="ln">22</span><span class="pl">+</span><span class="tx"></span></div>
<div class="dl" style="top:1254px"><span class="ln">23</span><span class="pl">+</span><span class="tx"><span class="b"><span class="as">*</span> access log路径如下：</span></span></div>
<div class="dl" style="top:1294px"><span class="ln">24</span><span class="pl">+</span><span class="tx"></span></div>
<div class="dl" style="top:1334px"><span class="ln">25</span><span class="pl">+</span><span class="tx"><span class="g">```</span></span></div>
<div class="dl" style="top:1374px"><span class="ln">26</span><span class="pl">+</span><span class="tx"><span class="g">$MW_HOME\user_projects\domains\&lt;domain_name&gt;\&lt;server_name&gt;\access.log</span></span></div>
<div class="dl" style="top:1414px"><span class="ln">27</span><span class="pl">+</span><span class="tx"><span class="g">```</span></span></div>
<div class="dl" style="top:1454px"><span class="ln">28</span><span class="pl">+</span><span class="tx"><span class="b"><span class="as">*</span> server log路径如下:</span></span></div>
<div class="dl" style="top:1494px"><span class="ln">29</span><span class="pl">+</span><span class="tx"></span></div>
<div class="dl" style="top:1534px"><span class="ln">30</span><span class="pl">+</span><span class="tx"><span class="g">```</span></span></div>
<div class="dl" style="top:1574px"><span class="ln">31</span><span class="pl">+</span><span class="tx"><span class="g">$MW_HOME\user_projects\domains\&lt;domain_name&gt;\&lt;server_name&gt;\&lt;server_name&gt;.log</span></span></div>
<div class="dl" style="top:1614px"><span class="ln">32</span><span class="pl">+</span><span class="tx"><span class="g">```</span></span></div>
<div class="dl" style="top:1654px"><span class="ln">33</span><span class="pl">+</span><span class="tx"><span class="b"><span class="as">*</span> domain log路径如下:</span></span></div>
<div class="dl" style="top:1694px"><span class="ln">34</span><span class="pl">+</span><span class="tx"></span></div>
<div class="dl" style="top:1734px"><span class="ln">35</span><span class="pl">+</span><span class="tx"><span class="g">```</span></span></div>
<div class="dl" style="top:1774px"><span class="ln">36</span><span class="pl">+</span><span class="tx"><span class="g">$MW_HOME\user_projects\domains\&lt;domain_name&gt;\&lt;domain_name&gt;.log</span></span></div>
<div class="dl" style="top:1814px"><span class="ln">37</span><span class="pl">+</span><span class="tx"><span class="g">```</span></span></div>
<div class="dl" style="top:1854px"><span class="ln">38</span><span class="pl">+</span><span class="tx"><span class="r">###  解释</span></span></div>
<div class="dl" style="top:1894px"><span class="ln">39</span><span class="pl">+</span><span class="tx"></span></div>
<div class="dl" style="top:1934px"><span class="ln">40</span><span class="pl">+</span><span class="tx"><span class="b"><span class="as">*</span> </span><span class="g">`$MW_HOME`</span><span class="b">是WebLogic的安装目录</span></span></div>
<div class="dl" style="top:1974px"><span class="ln">41</span><span class="pl">+</span><span class="tx"></span></div>
<div class="dl" style="top:2014px"><span class="ln">42</span><span class="pl">+</span><span class="tx"><span class="b"><span class="as">*</span> </span><span class="g">`&lt;domain_name&gt;`</span><span class="b">是域的实际名称，是在创建域的时候指定的</span></span></div>
<div class="dl" style="top:2054px"><span class="ln">43</span><span class="pl">+</span><span class="tx"></span></div>
<div class="dl" style="top:2094px"><span class="ln">44</span><span class="pl">+</span><span class="tx"><span class="b"><span class="as">*</span> </span><span class="g">`&lt;server_name&gt;`</span><span class="b">是Server的实际名称，是在创建Server的时候指定的</span></span></div>

<div id="dtrack"></div><div id="dthumb"></div>
<pre id="art">      __ ____        ___ __
  ___/ // / / __ _  &lt;  // /_ ___
 / _  //_  _//  &#x27; \ / // __/(_-&lt;
 \_,_/  /_/ /_/_/_//_/ \__//___/</pre>
<div class="wm" style="left:2460px;letter-spacing:11px">initsec</div><div class="wm" style="left:2861px;letter-spacing:8.400px">blog.gm7.org</div>
<div id="edge"></div>
</div>
</body></html>
